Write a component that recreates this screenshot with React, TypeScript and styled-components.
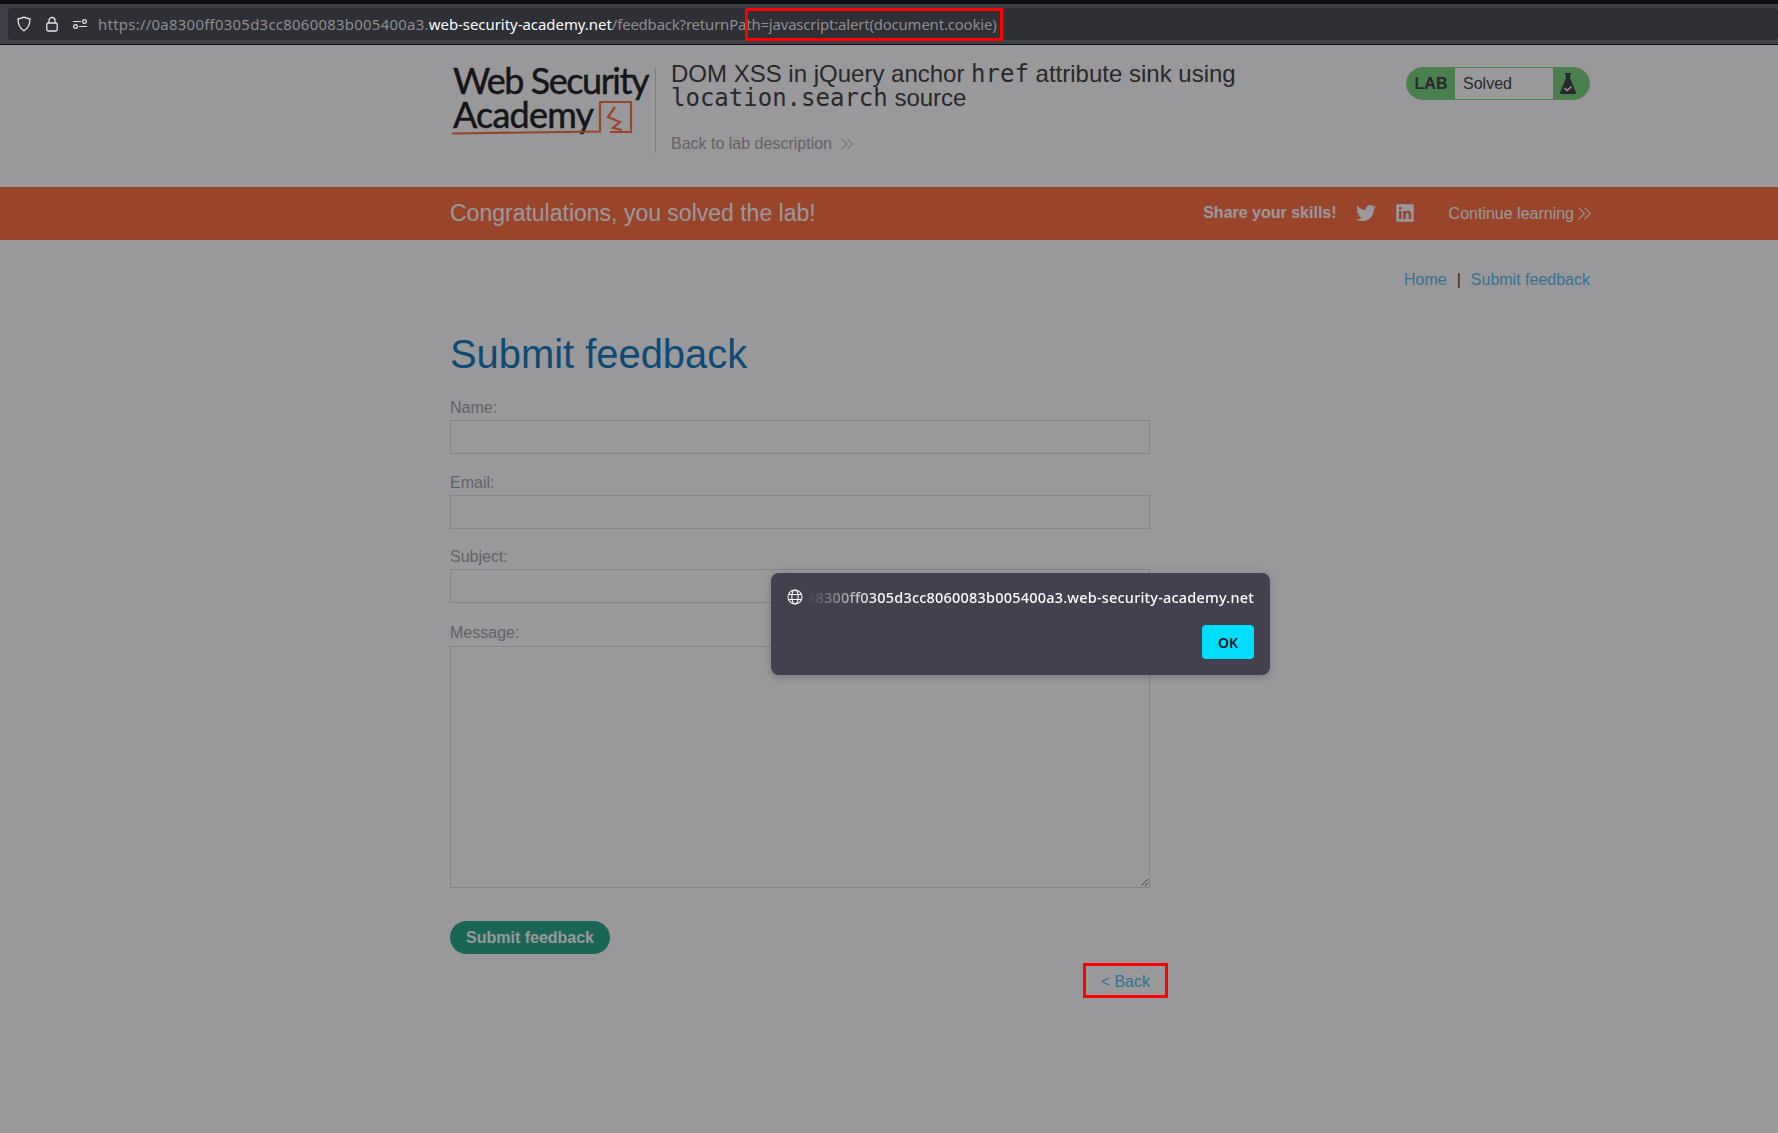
import React from "react";
import styled, { createGlobalStyle } from "styled-components";
import { FaTwitter, FaLinkedin } from "react-icons/fa";

const GlobalStyle = createGlobalStyle`
    html, body {
        margin: 0;
        padding: 0;
        background: #fff;
        font-family: "Liberation Sans", Arial, sans-serif;
    }
`;

const Screen = styled.div`
    width: 1778px;
    height: 1133px;
    overflow: hidden;
    display: flex;
    flex-direction: column;
`;

const Toolbar = styled.div`
    height: 45px;
    box-sizing: border-box;
    flex: none;
    background: #3f3f47;
    border-top: 4px solid #0c0c0e;
    border-bottom: 1px solid #0c0c0e;
    padding: 4px 0 4px 8px;
    position: relative;
`;

const UrlBar = styled.div`
    height: 32px;
    background: #2f2f36;
    border-radius: 4px;
    display: flex;
    align-items: center;
    padding-left: 8px;
    color: #8e8e92;
    font-family: "Noto Sans", sans-serif;
    font-size: 14.9px;
    white-space: pre;
`;

const UrlIcons = styled.div`
    display: flex;
    align-items: center;
    gap: 12px;
    margin-right: 10px;
    color: #e4e4e6;
    svg { display: block; }
`;

const UrlOrigin = styled.span`
    letter-spacing: 0.28px;
`;

const Host = styled.span`
    color: #fbfbfe;
`;

const UrlPath = styled.span`
    letter-spacing: -0.155px;
`;

const UrlHighlight = styled.div`
    position: absolute;
    left: 745px;
    top: 4px;
    width: 258px;
    height: 33px;
    box-sizing: border-box;
    border: 3px solid #ff0000;
`;

const Page = styled.div`
    position: relative;
    flex: 1;
    background: #fff;
`;

const Dim = styled.div`
    position: absolute;
    inset: 0;
    background: rgba(28, 27, 34, 0.45);
`;

const Header = styled.div`
    height: 142px;
    box-sizing: border-box;
    padding: 20px 188px 0 450px;
    display: flex;
    align-items: flex-start;
`;

const Logo = styled.div`
    position: relative;
    width: 205px;
    height: 88px;
    margin-top: -2px;
    flex: none;
    color: #111;
    font-family: Lato, sans-serif;
    font-size: 36px;
    line-height: 34px;
    -webkit-text-stroke: 0.5px #111;
    padding-left: 3px;
    box-sizing: border-box;
`;

const LogoLine = styled.div<{ $spacing: number }>`
    white-space: nowrap;
    letter-spacing: ${(p) => p.$spacing}px;
`;

const LogoMark = styled.svg`
    position: absolute;
    left: 0;
    top: 0;
`;

const TitleBlock = styled.div`
    height: 86px;
    padding: 0 0 0 15px;
    margin-top: 2px;
    border-left: 1px solid #cfd1d3;
    flex: 1;
`;

const Title = styled.div`
    font-size: 24px;
    line-height: 24px;
    color: #333332;
    width: 640px;
    margin-top: -5.5px;
`;

const Code = styled.code`
    font-family: "DejaVu Sans Mono", monospace;
    font-size: 24px;
`;

const BackToLab = styled.div`
    margin-top: 24px;
    font-size: 16px;
    line-height: 20px;
    color: #9c9fa1;
    display: flex;
    align-items: center;
    gap: 8px;
`;

const Status = styled.div`
    width: 184px;
    height: 33px;
    margin-top: 2px;
    box-sizing: border-box;
    border: 1.5px solid #70d274;
    border-radius: 17px;
    background: #70d274;
    display: flex;
    align-items: stretch;
    overflow: hidden;
    flex: none;
    color: #333332;
`;

const StatusLab = styled.div`
    width: 48px;
    font-weight: bold;
    font-size: 16px;
    display: flex;
    align-items: center;
    justify-content: center;
    box-sizing: border-box;
`;

const StatusText = styled.div`
    width: 98px;
    box-sizing: border-box;
    background: #fff;
    font-size: 16px;
    padding-left: 8px;
    display: flex;
    align-items: center;
`;

const StatusIcon = styled.div`
    flex: 1;
    display: flex;
    align-items: center;
    justify-content: center;
    padding-right: 7px;
`;

const Banner = styled.div`
    height: 53px;
    box-sizing: border-box;
    background: #ff6633;
    color: #fff;
    padding: 0 186px 1px 450px;
    display: flex;
    align-items: center;
`;

const BannerTitle = styled.div`
    font-size: 23px;
    flex: 1;
`;

const Share = styled.div`
    font-size: 16px;
    font-weight: bold;
    margin-right: 19px;
`;

const ShareIcon = styled.div`
    display: flex;
    margin-right: 19px;
    font-size: 20px;
`;

const Continue = styled.div`
    margin-left: 15px;
    padding-top: 1px;
    font-size: 16px;
    display: flex;
    align-items: center;
    gap: 3px;
`;

const Main = styled.div`
    padding: 0 188px 0 450px;
`;

const Crumbs = styled.div`
    margin-top: 30px;
    height: 20px;
    display: flex;
    justify-content: flex-end;
    gap: 10px;
    font-size: 16px;
    line-height: 20px;
    color: #333332;
`;

const Link = styled.span`
    color: #4abcf0;
`;

const Heading = styled.h1`
    margin: 40.5px 0 0;
    font-size: 39.9px;
    font-weight: normal;
    line-height: 46px;
    color: #0071bc;
`;

const Form = styled.div`
    width: 700px;
    margin-top: 17.5px;
`;

const Field = styled.div<{ $gap?: number }>`
    margin-bottom: ${(p) => p.$gap ?? 14.5}px;
`;

const Label = styled.label<{ $tight?: boolean }>`
    display: block;
    font-size: 16px;
    line-height: ${(p) => (p.$tight ? 25 : 27)}px;
    height: 26px;
    color: #9c9fa1;
`;

const Input = styled.input`
    display: block;
    width: 100%;
    height: 34px;
    box-sizing: border-box;
    border: 1px solid #d8dcdd;
    background: #fff;
    margin: 0;
    outline: none;
`;

const TextArea = styled.textarea`
    display: block;
    width: 100%;
    height: 242px;
    box-sizing: border-box;
    border: 1px solid #d8dcdd;
    background: #fff;
    margin: 0;
    outline: none;
`;

const Submit = styled.button`
    display: block;
    margin-top: 33px;
    width: 160px;
    height: 33px;
    border: 0;
    border-radius: 17px;
    background: #1aa284;
    color: #fff;
    font: bold 16px "Liberation Sans", sans-serif;
    padding: 0;
`;

const BackRow = styled.div`
    width: 700px;
    margin-top: 18px;
    display: flex;
    justify-content: flex-end;
    font-size: 16px;
    line-height: 20px;
`;

const BackBox = styled.div`
    position: absolute;
    left: 1083px;
    top: 918px;
    width: 85px;
    height: 35px;
    box-sizing: border-box;
    border: 3px solid #ff0000;
`;

const Dialog = styled.div`
    position: absolute;
    left: 771px;
    top: 528px;
    width: 499px;
    height: 102px;
    box-sizing: border-box;
    background: #42414d;
    border-radius: 8px;
    box-shadow: 0 2px 10px rgba(0, 0, 0, 0.2);
    padding: 15px 16px 16px 16px;
    display: flex;
    flex-direction: column;
    font-family: "Noto Sans", sans-serif;
    color: #fbfbfe;
`;

const DialogHost = styled.div`
    display: flex;
    align-items: center;
    height: 18px;
    svg { flex: none; display: block; }
`;

const HostName = styled.div`
    margin-left: 5px;
    font-size: 14.5px;
    font-weight: 500;
    letter-spacing: 0.2px;
    white-space: nowrap;
    overflow: hidden;
    flex: 1;
    display: flex;
    justify-content: flex-end;
    -webkit-mask-image: linear-gradient(to right, transparent, #000 70px);
    mask-image: linear-gradient(to right, transparent, #000 70px);
`;

const OkButton = styled.button`
    margin-top: 19px;
    align-self: flex-end;
    width: 52px;
    height: 34px;
    border: 0;
    border-radius: 4px;
    background: #00ddff;
    color: #15141a;
    font: 600 14px "Noto Sans", sans-serif;
    padding: 0;
`;

const Chevrons: React.FC<{ size?: number }> = ({ size = 14 }) => (
    <svg width={size} height={size} viewBox="0 0 14 14" fill="none" stroke="currentColor" strokeWidth="1">
        <path d="M1.5 1.5 7 7l-5.5 5.5M7 1.5 12.5 7 7 12.5" />
    </svg>
);

const App: React.FC = () => {
    return (
        <Screen>
            <GlobalStyle />
            <Toolbar>
                <UrlBar>
                    <UrlIcons>
                        <svg width="16" height="16" viewBox="0 0 16 16" fill="none" stroke="currentColor" strokeWidth="1.3">
                            <path d="M8 1.2c2 1 3.8 1.5 6 1.6 0 5-1.2 9.4-6 12-4.8-2.6-6-7-6-12 2.2-.1 4-.6 6-1.6z" />
                        </svg>
                        <svg width="16" height="16" viewBox="0 0 16 16" fill="none" stroke="currentColor" strokeWidth="1.3">
                            <rect x="2.8" y="7" width="10.4" height="8" rx="1.5" />
                            <path d="M5 7V4.5a3 3 0 0 1 6 0V7" />
                        </svg>
                        <svg width="16" height="16" viewBox="0 0 16 16" fill="none" stroke="currentColor" strokeWidth="1.2">
                            <path d="M1 5.5h8M7 10.5h8" />
                            <circle cx="12.5" cy="5.5" r="1.9" />
                            <circle cx="3.5" cy="10.5" r="1.9" />
                        </svg>
                    </UrlIcons>
                    <UrlOrigin>https://0a8300ff0305d3cc8060083b005400a3.</UrlOrigin>
                    <Host>web-security-academy.net</Host>
                    <UrlPath>/feedback?returnPath=javascript:alert(document.cookie)</UrlPath>
                </UrlBar>
                <UrlHighlight />
            </Toolbar>
            <Page>
                <Header>
                    <Logo>
                        <LogoLine $spacing={-1.45}>Web Security</LogoLine>
                        <LogoLine $spacing={-0.8}>Academy</LogoLine>
                        <LogoMark width="205" height="88" viewBox="0 0 205 88" fill="none" stroke="#ff6633" strokeWidth="2.2">
                            <path d="M2 70.5c50-.5 100-1.5 148-2V39h31v30h-21" />
                            <path d="M165 44l-7 10 12 5-7 6 9 2" />
                        </LogoMark>
                    </Logo>
                    <TitleBlock>
                        <Title>
                            DOM XSS in jQuery anchor <Code>href</Code> attribute sink using <Code>location.search</Code> source
                        </Title>
                        <BackToLab>
                            Back to lab description
                            <Chevrons />
                        </BackToLab>
                    </TitleBlock>
                    <Status>
                        <StatusLab>LAB</StatusLab>
                        <StatusText>Solved</StatusText>
                        <StatusIcon>
                            <svg width="16" height="21" viewBox="0 0 16 21">
                                <path d="M5 0h6v1.5h-.8V5.5L16 19.5a1 1 0 0 1-1 1.5H1a1 1 0 0 1-1-1.5L5.8 5.5V1.5H5z" fill="#333332" />
                                <path d="M4.5 15l2.5 2.5 4.5-4" fill="none" stroke="#fff" strokeWidth="1.5" />
                            </svg>
                        </StatusIcon>
                    </Status>
                </Header>
                <Banner>
                    <BannerTitle>Congratulations, you solved the lab!</BannerTitle>
                    <Share>Share your skills!</Share>
                    <ShareIcon><FaTwitter /></ShareIcon>
                    <ShareIcon><FaLinkedin /></ShareIcon>
                    <Continue>
                        Continue learning
                        <Chevrons size={15} />
                    </Continue>
                </Banner>
                <Main>
                    <Crumbs>
                        <Link>Home</Link>
                        <span>|</span>
                        <Link>Submit feedback</Link>
                    </Crumbs>
                    <Heading>Submit feedback</Heading>
                    <Form>
                        <Field>
                            <Label>Name:</Label>
                            <Input />
                        </Field>
                        <Field>
                            <Label>Email:</Label>
                            <Input />
                        </Field>
                        <Field $gap={17}>
                            <Label>Subject:</Label>
                            <Input />
                        </Field>
                        <Field>
                            <Label $tight>Message:</Label>
                            <TextArea />
                        </Field>
                        <Submit>Submit feedback</Submit>
                    </Form>
                    <BackRow>
                        <Link>&lt; Back</Link>
                    </BackRow>
                </Main>
                <Dim />
                <BackBox />
                <Dialog>
                    <DialogHost>
                        <svg width="16" height="16" viewBox="0 0 16 16" fill="none" stroke="#fbfbfe" strokeWidth="1.1">
                            <circle cx="8" cy="8" r="7" />
                            <ellipse cx="8" cy="8" rx="3.2" ry="7" />
                            <path d="M1.5 5.5h13M1.5 10.5h13" />
                        </svg>
                        <HostName>a8300ff0305d3cc8060083b005400a3.web-security-academy.net</HostName>
                    </DialogHost>
                    <OkButton>OK</OkButton>
                </Dialog>
            </Page>
        </Screen>
    );
};

export default App;
